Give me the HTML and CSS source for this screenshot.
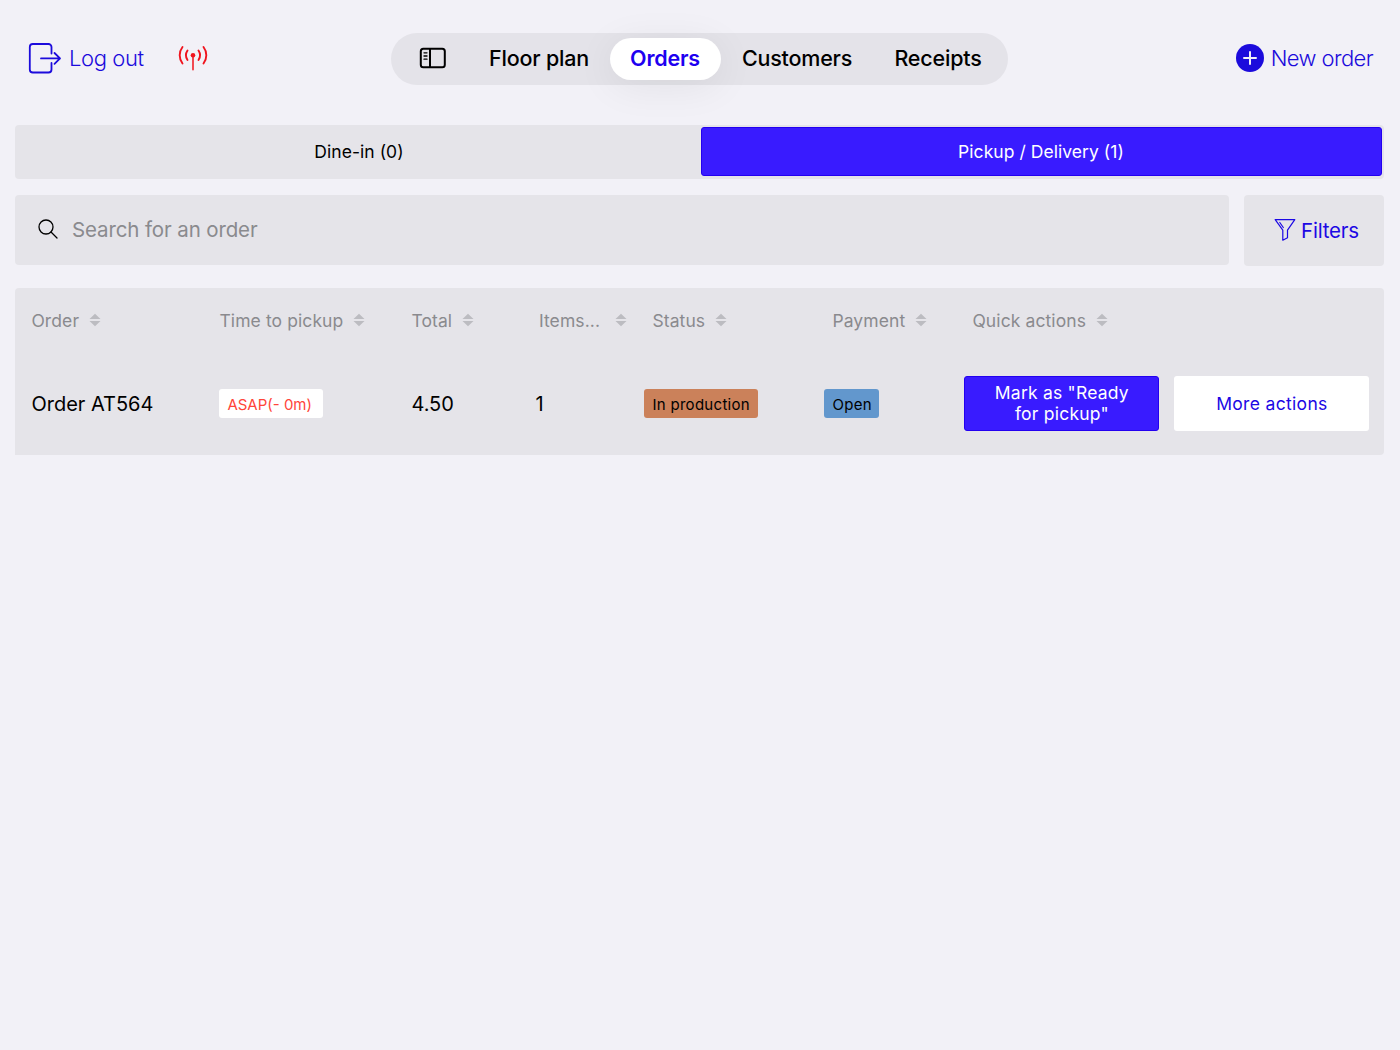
FILE: index.html
```html
<!DOCTYPE html>
<html lang="en">
<head>
<meta charset="utf-8">
<title>Orders</title>
<link rel="stylesheet" href="styles.css">
</head>
<body>
<svg class="defs" width="0" height="0" aria-hidden="true">
  <symbol id="sort" viewBox="0 0 12 14"><path d="M6 .8 11.500 6H.5zM6 13.2 .5 8h11z"/></symbol>
</svg>
<header class="topbar">
  <div class="topbar-left">
    <a class="link logout">
      <svg width="34" height="32" viewBox="0 0 34 32" fill="none" stroke="currentColor" stroke-width="1.8" stroke-linecap="round" stroke-linejoin="round"><path d="M23.5 11.5V5a3 3 0 0 0-3-3H4.800a3 3 0 0 0-3 3v22.500a3 3 0 0 0 3 3h15.700a3 3 0 0 0 3-3V21M13 16.400h19M26.500 11l5.500 5.400-5.500 5.400"/></svg>
      <span>Log out</span>
    </a>
    <svg class="signal" width="32" height="28" viewBox="0 0 32 28" fill="none" stroke="currentColor" stroke-width="1.900" stroke-linecap="round"><path d="M5.500 3a13.500 13.500 0 0 0 0 16.500M10.500 6.500a8.500 8.500 0 0 0 0 9.500M21.500 6.500a8.500 8.500 0 0 1 0 9.500M26.500 3a13.500 13.500 0 0 1 0 16.500"/><path d="M16 12v13.500" opacity=".8"/><circle cx="16" cy="11.300" r="2.300" fill="currentColor" stroke="none"/></svg>
  </div>
  <nav class="nav">
    <a class="nav-item nav-side"><svg width="28" height="22" viewBox="0 0 28 22" fill="none" stroke="currentColor" stroke-width="2" stroke-linecap="round"><rect x="1.800" y="1.800" width="24" height="18.400" rx="2.500"/><path d="M11 2v18"/><path d="M5 5.800h3M5 9h3M5 12.200h3" stroke-width="1.300"/></svg></a>
    <a class="nav-item nav-floor">Floor plan</a>
    <a class="nav-item nav-orders active">Orders</a>
    <a class="nav-item nav-customers">Customers</a>
    <a class="nav-item nav-receipts">Receipts</a>
  </nav>
  <div class="topbar-right">
    <a class="link new-order">
      <svg width="28" height="28" viewBox="0 0 28 28"><circle cx="14" cy="14" r="14" fill="currentColor"/><path d="M14 8v12M8 14h12" stroke="#f2f1f7" stroke-width="2" stroke-linecap="round"/></svg>
      <span>New order</span>
    </a>
  </div>
</header>
<main class="content">
  <div class="segments">
    <button class="segment">Dine-in (0)</button>
    <button class="segment selected">Pickup / Delivery (1)</button>
  </div>
  <div class="tools">
    <div class="search">
      <svg width="20" height="20" viewBox="0 0 20 20" fill="none" stroke="#000" stroke-width="1.300" stroke-linecap="round"><circle cx="8" cy="8" r="7"/><path d="m13 13 6 6"/></svg>
      <span>Search for an order</span>
    </div>
    <button class="filters">
      <svg width="22" height="24" viewBox="0 0 22 24" fill="none" stroke="currentColor" stroke-width="1.200" stroke-linejoin="round" stroke-linecap="round"><path d="M1.200 1.600h19.600l-7.300 10.500v7.700l-4.700 2.400V12.100zM5.800 4.500l3.500 5"/></svg>
      <span>Filters</span>
    </button>
  </div>
  <section class="table">
    <div class="row head">
      <div class="cell"><span>Order</span><svg class="sort"><use href="#sort"/></svg></div>
      <div class="cell"><span>Time to pickup</span><svg class="sort"><use href="#sort"/></svg></div>
      <div class="cell"><span>Total</span><svg class="sort"><use href="#sort"/></svg></div>
      <div class="cell items"><span>Items...</span><svg class="sort"><use href="#sort"/></svg></div>
      <div class="cell inset"><span>Status</span><svg class="sort"><use href="#sort"/></svg></div>
      <div class="cell inset"><span>Payment</span><svg class="sort"><use href="#sort"/></svg></div>
      <div class="cell inset"><span>Quick actions</span><svg class="sort"><use href="#sort"/></svg></div>
    </div>
    <div class="row order">
      <div class="cell">Order AT564</div>
      <div class="cell"><span class="badge late">ASAP(- 0m)</span></div>
      <div class="cell">4.50</div>
      <div class="cell">1</div>
      <div class="cell"><span class="badge production">In production</span></div>
      <div class="cell"><span class="badge open">Open</span></div>
      <div class="cell actions">
        <button class="action primary">Mark as "Ready<br>for pickup"</button>
        <button class="action more">More actions</button>
      </div>
    </div>
  </section>
</main>
</body>
</html>
```
FILE: styles.css
```css
* { box-sizing: border-box; }

body {
  margin: 0;
  min-height: 1050px;
  background: #f2f1f7;
  color: #000;
  font-family: Inter, "Liberation Sans", sans-serif;
  white-space: nowrap;
}

button {
  border: 0;
  margin: 0;
  padding: 0;
  font: inherit;
  color: inherit;
  white-space: nowrap;
}

svg { display: block; flex: none; }
.defs { position: absolute; }

.topbar {
  display: grid;
  grid-template-columns: 363px 617px 1fr;
  align-items: center;
  height: 116px;
  padding: 0 27px 0 28px;
}

.topbar-left, .topbar-right, .link { display: flex; align-items: center; }
.topbar-right { justify-content: flex-end; }
.link { color: #1c0bdc; font-size: 22px; font-weight: 300; }
.logout { gap: 7px; letter-spacing: -.4px; }
.new-order { gap: 7px; letter-spacing: -.6px; }
.signal { margin-left: 33px; color: #f0141e; }

.nav {
  display: flex;
  height: 52px;
  margin-top: 1px;
  padding: 5px 5.5px;
  border-radius: 26px;
  background: #e4e3e9;
}
.nav-item {
  display: flex;
  align-items: center;
  justify-content: center;
  padding-bottom: 1px;
  border-radius: 21px;
  font-size: 21.5px;
  font-weight: 500;
  letter-spacing: -.2px;
}
.nav-side { width: 72px; }
.nav-floor { width: 141px; }
.nav-orders { width: 111px; }
.nav-customers { width: 153px; }
.nav-receipts { width: 129px; }
.active {
  background: #fff;
  color: #1e00f0;
  font-weight: 600;
  box-shadow: 0 6px 40px rgba(0, 0, 0, .07);
}

.content { padding: 8.5px 16px 0 15px; }

.segments {
  display: grid;
  grid-template-columns: 1fr 681px;
  height: 54.500px;
  padding: 2.5px;
  border-radius: 4px;
  background: #e5e4e9;
}
.segment { background: none; border-radius: 3px; font-size: 17.5px; letter-spacing: .05px; }
.selected { height: 49px; background: #391bff; color: #fff; border: 1px solid #2300f0; }

.tools { display: flex; gap: 15.5px; margin-top: 15.5px; align-items: flex-start; }
.search {
  display: flex;
  align-items: center;
  flex: 1;
  gap: 14px;
  height: 70px;
  padding-left: 23px;
  border-radius: 4px;
  background: #e5e4e9;
  color: #8a8a8e;
  font-size: 20.5px;
  letter-spacing: -.12px;
}
.search svg { margin-top: -2px; }
.filters {
  display: flex;
  align-items: center;
  justify-content: center;
  gap: 5px;
  width: 140px;
  height: 71px;
  padding-left: 5px;
  border-radius: 4px;
  background: #e5e4e9;
  color: #1c08e4;
  font-size: 20.5px;
  letter-spacing: -.2px;
}

.table { margin-top: 22px; border-radius: 4px 4px 4px 0; background: #e5e4e9; }
.row {
  display: grid;
  grid-template-columns: 188px 192px 124px 109px 180px 140px 1fr;
  align-items: center;
  padding-left: 16.4px;
}
.cell { display: flex; align-items: center; }
.head { height: 65px; color: #8a8a8e; font-size: 17.5px; letter-spacing: .1px; }
.head .cell { gap: 10px; }
.head .items { padding-left: 3.5px; gap: 14.5px; }
.head .inset { padding-left: 8px; }
.sort { width: 12px; height: 14px; fill: #bcbcc1; }

.order { height: 102px; font-size: 20px; }
.badge {
  display: flex;
  align-items: center;
  height: 28.500px;
  padding: 1px 8px 0;
  border-radius: 3px;
  font-size: 15px;
  letter-spacing: .3px;
}
.late { width: 104px; background: #fff; color: #ff453a; letter-spacing: 0; }
.production { width: 113.500px; background: #cb815a; }
.open { width: 55px; background: #6297cd; }

.actions { gap: 15px; }
.action { width: 195px; height: 54.500px; border-radius: 3px; font-size: 17.5px; line-height: 21px; }
.primary { padding-bottom: 1px; background: #391bff; color: #fff; border: 1px solid #2300f0; letter-spacing: .22px; }
.more { background: #fff; color: #1c08e4; letter-spacing: .32px; }
```
